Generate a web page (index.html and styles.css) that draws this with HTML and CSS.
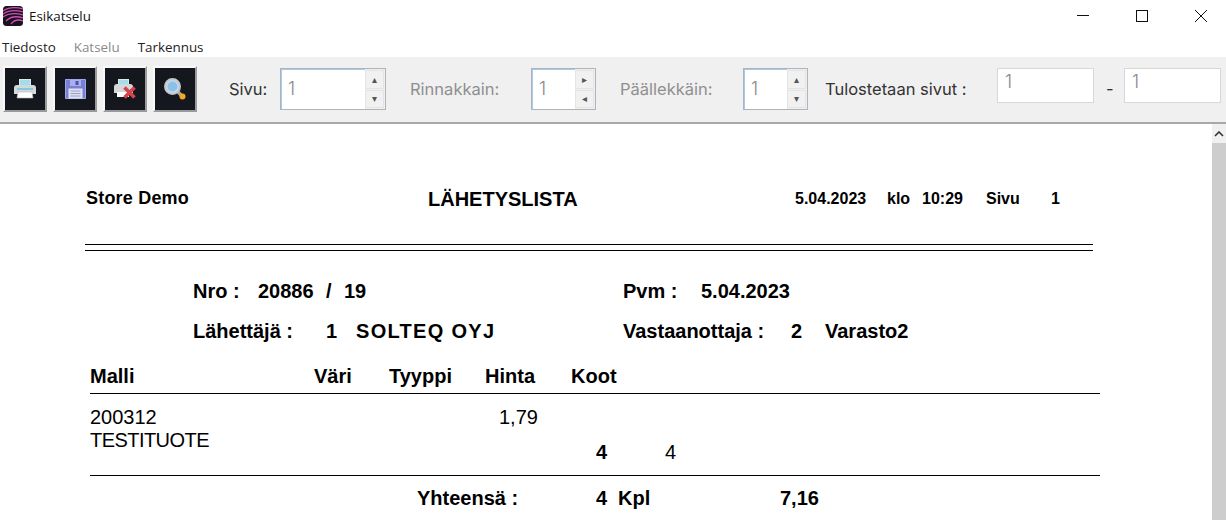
FILE: index.html
```html
<!DOCTYPE html>
<html lang="fi">
<head>
<meta charset="utf-8">
<title>Esikatselu</title>
<link rel="stylesheet" href="styles.css">
</head>
<body>
<div class="window">
  <header class="titlebar">
    <svg class="appicon" width="20" height="20" viewBox="0 0 20 20">
      <rect x="0" y="0" width="20" height="20" rx="3.5" fill="#17141f"/>
      <path d="M0 5C6 1 13 1 20 3M0 8C6 4 13 4 20 6M0 11C6 7 13 7 20 9M3 15C8 10 14 10 20 12M8 18C11 14 15 13 20 15" fill="none" stroke="#d24fb4" stroke-width="1.3"/>
    </svg>
    <span class="title">Esikatselu</span>
    <div class="winbtns">
      <svg class="winbtn" width="12" height="12" viewBox="0 0 12 12"><path d="M0 5.5H12" stroke="#111" fill="none"/></svg>
      <svg class="winbtn" width="12" height="12" viewBox="0 0 12 12"><rect x="0.5" y="0.5" width="11" height="11" stroke="#111" fill="none"/></svg>
      <svg class="winbtn" width="12" height="12" viewBox="0 0 12 12"><path d="M0 0L12 12M12 0L0 12" stroke="#111" fill="none"/></svg>
    </div>
  </header>
  <nav class="menubar">
    <span>Tiedosto</span><span class="dim">Katselu</span><span>Tarkennus</span>
  </nav>
  <div class="toolbar">
    <div class="tools">
      <button class="tool" type="button">
        <svg width="22" height="20" viewBox="0 0 22 20"><rect x="5.5" y="0.5" width="11" height="8" fill="#a6dbe9" stroke="#dbe8ec"/><path d="M0 9Q0 6 3 6H19Q22 6 22 9V15H0Z" fill="#d3d8da"/><rect x="3" y="9" width="16" height="2" fill="#86c9de"/><path d="M4 13H18L19 19H3Z" fill="#fff" stroke="#bbb" stroke-width=".6"/></svg>
      </button>
      <button class="tool" type="button">
        <svg width="21" height="20" viewBox="0 0 21 20"><path d="M.5.5H20.5V19.5H.5Z" fill="#7880d6" stroke="#9ea6ef"/><rect x="5" y="1" width="11" height="6" fill="#aab0ee"/><rect x="10.5" y="2" width="3" height="4" fill="#4b53a6"/><rect x="3.5" y="9.5" width="14" height="10" fill="#dfe1f2"/><path d="M5.5 12H15.5M5.5 14.5H15.5M5.5 17H15.5" stroke="#9a9ec8"/></svg>
      </button>
      <button class="tool" type="button">
        <svg width="22" height="20" viewBox="0 0 22 20"><rect x="4.5" y="0.5" width="10" height="7" fill="#a6dbe9" stroke="#dbe8ec"/><path d="M0 8Q0 5 3 5H16Q19 5 19 8V14H0Z" fill="#d3d8da"/><rect x="3" y="13" width="12" height="5" fill="#fff"/><path d="M10.5 8.5L20.500 18.500M20.500 8.500L10.500 18.500" stroke="#d5444c" stroke-width="3.6"/></svg>
      </button>
      <button class="tool" type="button">
        <svg width="22" height="22" viewBox="0 0 22 22"><path d="M13 13L18 18" stroke="#a5a5a5" stroke-width="3.500"/><circle cx="8.500" cy="8.500" r="7.500" fill="#bcdcf0" stroke="#c6c6c6" stroke-width="2"/><circle cx="8.500" cy="8.500" r="5" fill="#8fbfe6"/><circle cx="18.500" cy="18.500" r="3" fill="#f5a623"/></svg>
      </button>
    </div>
    <label class="lbl lbl-sivu">Sivu:</label>
    <div class="spin spin-wide"><span class="val">1</span><div class="arrows"><span class="arr">▴</span><span class="arr">▾</span></div></div>
    <label class="lbl dim lbl-rin">Rinnakkain:</label>
    <div class="spin spin-narrow"><span class="val">1</span><div class="arrows"><span class="arr">▸</span><span class="arr">◂</span></div></div>
    <label class="lbl dim lbl-paa">Päällekkäin:</label>
    <div class="spin spin-narrow"><span class="val">1</span><div class="arrows"><span class="arr">▴</span><span class="arr">▾</span></div></div>
    <label class="lbl lbl-tul">Tulostetaan sivut :</label>
    <div class="field"><span class="val">1</span></div>
    <span class="lbl dash">-</span>
    <div class="field"><span class="val">1</span></div>
  </div>
  <main class="viewer">
    <article class="report">
      <div class="rep-head">
        <span class="store">Store Demo</span>
        <span class="rep-title">LÄHETYSLISTA</span>
        <span class="small date">5.04.2023</span>
        <span class="small klo">klo</span>
        <span class="small time">10:29</span>
        <span class="small sivu">Sivu</span>
        <span class="small pg">1</span>
      </div>
      <div class="double"></div>
      <div class="info info-1">
        <span>Nro :</span><span>20886</span><span>/</span><span>19</span>
        <span>Pvm :</span><span>5.04.2023</span>
      </div>
      <div class="info info-2">
        <span>Lähettäjä :</span><span>1</span><span class="wide">SOLTEQ OYJ</span>
        <span>Vastaanottaja :</span><span>2</span><span>Varasto2</span>
      </div>
      <div class="thead">
        <span>Malli</span><span>Väri</span><span>Tyyppi</span><span>Hinta</span><span>Koot</span>
      </div>
      <div class="tbody">
        <div class="prod"><span>200312</span><span class="tight">TESTITUOTE</span></div>
        <div class="price">1,79</div>
        <div class="qty"><b class="q1">4</b><span>4</span></div>
      </div>
      <div class="total">
        <span>Yhteensä :</span><span>4</span><span>Kpl</span><span>7,16</span>
      </div>
    </article>
    <div class="scrollbar">
      <svg class="sb-up" width="10" height="6" viewBox="0 0 10 6"><path d="M1 5L5 1L9 5" fill="none" stroke="#333" stroke-width="1.6"/></svg>
      <div class="thumb"></div>
    </div>
  </main>
</div>
</body>
</html>
```
FILE: styles.css
```css
* { box-sizing: border-box; }
html, body { margin: 0; padding: 0; height: 100%; overflow: hidden; background: #fff; }
body { font-family: "Liberation Sans", Arial, sans-serif; color: #000; }
.window { width: 1226px; height: 520px; display: flex; flex-direction: column; overflow: hidden; }

.titlebar { height: 36px; flex: none; display: flex; align-items: center; padding: 0 0 5px 3px; }
.appicon { flex: none; }
.title { margin-left: 6px; font: 13.4px "Open Sans", sans-serif; color: #111; }
.winbtns { margin-left: auto; display: flex; gap: 47px; padding-right: 19px; }

.menubar { height: 21px; flex: none; display: flex; align-items: center; gap: 18px; padding: 0 0 0 2px; font: 13.4px "Open Sans", sans-serif; color: #222; }
.dim { color: #8a8a8a; }

.toolbar { height: 67px; flex: none; display: flex; align-items: center; background: #f0f0f0; border-bottom: 2px solid #a8a8a8; padding: 0 0 1px 3px; }
.tools { display: flex; gap: 6px; }
.tool { width: 44px; height: 46px; padding: 0; display: flex; align-items: center; justify-content: center; background: #14171e; border: 2px solid; border-color: #f8f8f8 #9a9a9a #9a9a9a #f8f8f8; }

.lbl { font: 16.5px Inter, sans-serif; font-weight: 400; color: #333; white-space: nowrap; }
.lbl.dim { color: #8f8f8f; }
.lbl-sivu { margin-left: 32px; margin-right: 8px; width: 43px; }
.lbl-rin { margin-left: 24px; margin-right: 11px; width: 110px; }
.lbl-paa { margin-left: 24px; margin-right: 11px; width: 112px; }
.lbl-tul { margin-left: 17px; margin-right: 5px; width: 167px; }
.dash { margin: 0 12px; width: 6px; }

.spin { height: 42px; display: flex; background: #fff; border: 1px solid #aeb4bc; box-shadow: inset 1px 1px 0 #a9c9ea; }
.spin-wide { width: 106px; }
.spin-narrow { width: 65px; }
.val { font: 300 18px Inter, sans-serif; color: #888; padding: 9px 0 0 7px; flex: 1; }
.arrows { width: 20px; flex: none; display: flex; flex-direction: column; gap: 1px; padding: 1px 1px 1px 0; background: #f0f0f0; }
.arr { flex: 1; display: flex; align-items: center; justify-content: center; font-size: 10px; color: #555; border: 1px solid #e4e4e4; background: #f1f1f1; }

.field { width: 97px; height: 35px; background: #fff; border: 1px solid #d8d8d8; margin-bottom: 7px; display: flex; }
.field .val { padding: 2px 0 0 7px; }

.viewer { flex: 1; display: flex; min-height: 0; overflow: hidden; background: #fff; }
.report { flex: 1; padding: 0 0 0 85px; font-weight: bold; min-width: 0; }
.rep-head { padding-top: 62px; padding-left: 1px; display: grid; grid-template-columns: 342px 367px 92px 35px 64px 65px auto; align-items: center; height: 85px; }
.store { font-size: 18px; letter-spacing: .2px; }
.rep-title { font-size: 20px; padding-top: 2px; }
.small { font-size: 16px; }
.double { width: 1008px; height: 7px; margin-top: 35px; border-top: 1px solid #000; border-bottom: 1px solid #000; }

.info { display: grid; font-size: 20px; align-items: center; padding-left: 108px; }
.info-1 { grid-template-columns: 65px 68px 18px 279px 78px auto; margin-top: 29px; }
.info-2 { grid-template-columns: 133px 30px 267px 168px 34px auto; margin-top: 17px; }
.wide { letter-spacing: 1.3px; }

.thead { width: 1010px; margin: 21px 0 0 5px; display: grid; grid-template-columns: 224px 75px 96px 86px auto; font-size: 20px; height: 30px; padding-bottom: 5px; border-bottom: 1px solid #000; align-items: center; }
.tbody { width: 1010px; margin-left: 5px; height: 82px; border-bottom: 1px solid #000; display: grid; grid-template-columns: 409px 97px auto; font-weight: normal; font-size: 20px; padding-top: 12px; }
.prod { display: flex; flex-direction: column; line-height: 23px; }
.tight { letter-spacing: -.55px; }
.price { line-height: 23px; }
.qty { padding-top: 35px; display: grid; grid-template-columns: 69px auto; line-height: 23px; }
.q1 { font-weight: bold; }
.total { width: 1010px; margin: 11px 0 0 5px; padding-left: 327px; display: grid; grid-template-columns: 179px 22px 162px auto; font-size: 20px; line-height: 23px; }

.scrollbar { width: 14px; flex: none; background: #f0f0f0; display: flex; flex-direction: column; align-items: center; padding-top: 7px; }
.thumb { width: 14px; flex: 1; margin-top: 6px; background: #cdcdcd; }
```
